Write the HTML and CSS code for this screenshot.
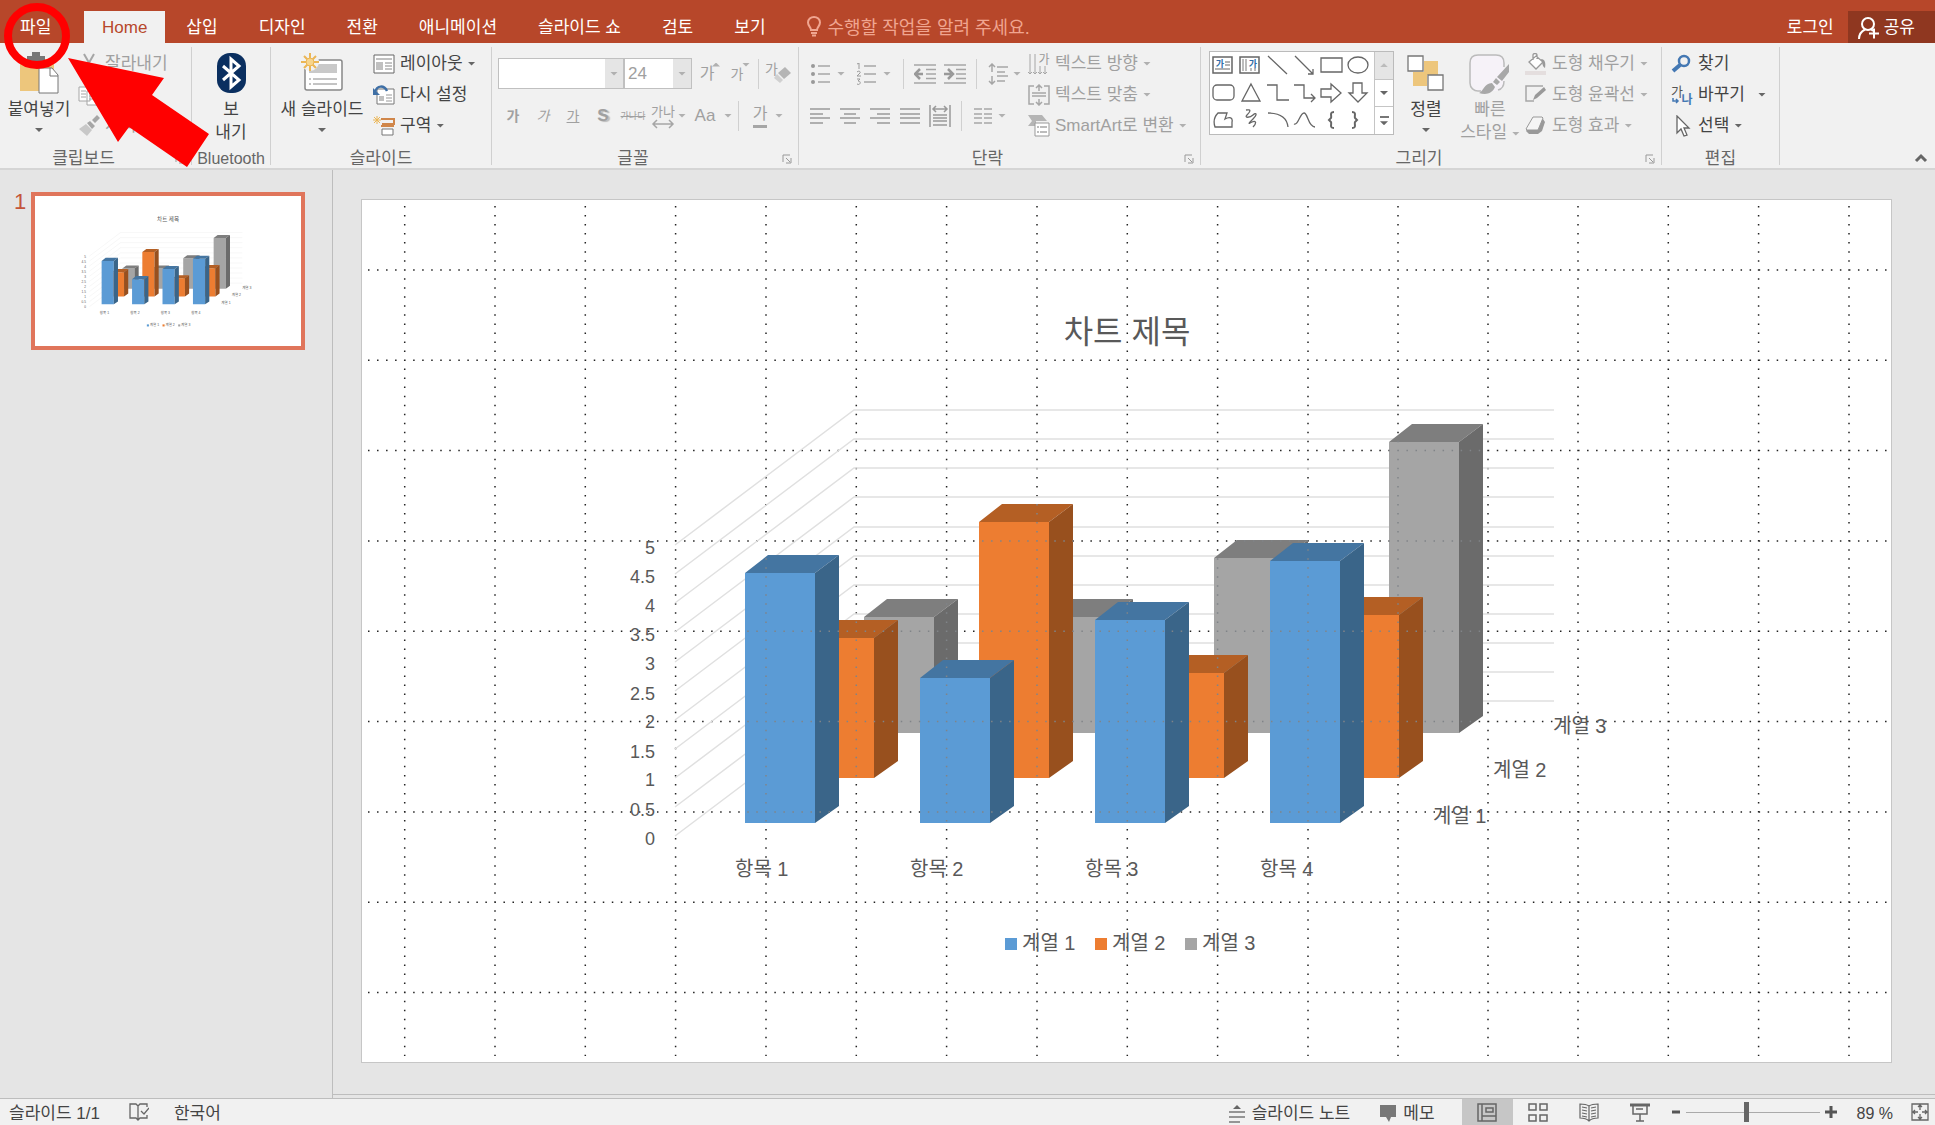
FILE: index.html
```html
<!DOCTYPE html>
<html lang="ko">
<head>
<meta charset="utf-8">
<title>프레젠테이션</title>
<link rel="stylesheet" href="styles.css">
</head>
<body>
<div class="app">
  <header class="titlebar">
    <nav class="tabs">
      <a class="tab tab-file" href="#">파일</a>
      <a class="tab tab-active" href="#">Home</a>
      <a class="tab" href="#">삽입</a>
      <a class="tab" href="#">디자인</a>
      <a class="tab" href="#">전환</a>
      <a class="tab" href="#">애니메이션</a>
      <a class="tab" href="#">슬라이드 쇼</a>
      <a class="tab" href="#">검토</a>
      <a class="tab" href="#">보기</a>
      <a class="tab tab-tell" href="#">
        <svg width="14" height="21" viewBox="0 0 14 21" fill="none" stroke="#f0a590" stroke-width="2"><path d="M4 14C4 11 1 10 1 6.500a6 5.500 0 0 1 12 0C13 10 10 11 10 14ZM4 17h6M5 19.500h4"/></svg>
        수행할 작업을 알려 주세요.</a>
    </nav>
    <div class="account">
      <a class="login" href="#">로그인</a>
      <button class="share" type="button">
        <svg width="22" height="24" viewBox="0 0 22 24" fill="none" stroke="#fff" stroke-width="2"><circle cx="10" cy="8" r="6"/><path d="M1 23c0-5 3-8 6-9.500M13 13l2 2M16 12.500v10M11 17.500h10"/></svg>
        공유</button>
    </div>
  </header>

  <section class="ribbon" aria-label="리본">
    <div class="group g-clipboard">
      <div class="group-body">
        <button class="big big-paste" type="button">
          <span class="big-icon"><svg width="40" height="44" viewBox="0 0 40 44"><path d="M1 8h34v32H1z" fill="#edc67c"/><path d="M8 11V5h5V1h8v4h5v6z" fill="#777"/><path d="M20 17h13l6 7v18H20z" fill="#fff" stroke="#777"/><path d="M31 17v8h8" fill="none" stroke="#777"/></svg></span>
          <span>붙여넣기</span><i class="caret"></i>
        </button>
        <div class="stack off">
          <button class="small" type="button"><svg width="22" height="22" viewBox="0 0 22 22" stroke="#a6a6a6" stroke-width="2" fill="none"><path d="M6 1l8 14M16 1L8 15"/><circle cx="6" cy="18" r="3"/><circle cx="16" cy="18" r="3"/></svg>잘라내기</button>
          <button class="small" type="button"><svg width="22" height="22" viewBox="0 0 22 22" stroke="#a6a6a6" fill="#fff"><path d="M1 3h11v14H1zM9 7h11v14H9zM3 7h5M3 10h5M3 13h5M11 12h7M11 15h7"/></svg>복사 <i class="caret"></i></button>
          <button class="small" type="button"><svg width="22" height="22" viewBox="0 0 22 22" fill="#a6a6a6"><path d="M1 14l7-5 6 6-5 6z" fill="#c8c8c8"/><path d="M9 8l3-2 5 5-3 3zM14 5l5-5 3 3-5 5z"/></svg>서식 복사</button>
        </div>
      </div>
      <div class="group-foot"><span>클립보드</span><button class="launch" type="button" aria-label="클립보드 옵션"><svg width="10" height="10"><use href="#i-launch"/></svg></button></div>
    </div>

    <div class="group g-bt">
      <div class="group-body center">
        <button class="big" type="button">
          <span class="big-icon"><svg width="30" height="42" viewBox="0 0 30 42"><rect x="1" y="1" width="29" height="40" rx="13" fill="#0a2f60"/><path d="M7 14l16 14-8 7V7l8 7L7 28" fill="none" stroke="#fff" stroke-width="3"/></svg></span>
          <span>보<br>내기</span>
        </button>
      </div>
      <div class="group-foot"><span>Bluetooth</span></div>
    </div>

    <div class="group g-slides">
      <div class="group-body">
        <button class="big big-new" type="button">
          <span class="big-icon"><svg width="42" height="40" viewBox="0 0 42 40"><rect x="4" y="7" width="37" height="30" rx="2" fill="#fff" stroke="#888" stroke-width="1.500"/><path d="M8 11h28v9H8z" fill="#c9c9c9"/><path d="M8 26h2M12 26h24M8 31h2M12 31h24" stroke="#888"/><circle cx="9" cy="9" r="9" fill="#f1f1f1"/><path d="M9 0v18M0 9h18M3 3l12 12M15 3L3 15" stroke="#ebb656" stroke-width="2"/><circle cx="9" cy="9" r="4" fill="#f7d58d" stroke="#ebb656"/></svg></span>
          <span>새 슬라이드</span><i class="caret"></i>
        </button>
        <div class="stack">
          <button class="small" type="button"><svg width="22" height="22" viewBox="0 0 22 22"><path d="M1 2h20v18H1z" fill="#fff" stroke="#666"/><path d="M3 5h16v2H3zM3 9h7v8H3z" fill="#c0c0c0"/><path d="M12 10h7M12 13h7M12 16h7" stroke="#888"/></svg>레이아웃 <i class="caret"></i></button>
          <button class="small" type="button"><svg width="22" height="22" viewBox="0 0 22 22"><path d="M4 5h17v15H4z" fill="#fff" stroke="#777"/><path d="M6 12h5v5H6z" fill="#c0c0c0"/><path d="M13 11h6M13 14h6M13 17h6" stroke="#999"/><path d="M2 8c2-7 9-7 12-1" fill="none" stroke="#3f6fa5" stroke-width="2.500"/><path d="M0 4v7h7z" fill="#3f6fa5"/></svg>다시 설정</button>
          <button class="small" type="button"><svg width="22" height="22" viewBox="0 0 22 22"><path d="M8 4h13v5H9M8 11h13" fill="none" stroke="#d0864a" stroke-width="2"/><path d="M9 14h11v6H9z" fill="#fff" stroke="#777"/><path d="M4 1v8M0 5h8M1 2l6 6M7 2L1 8" stroke="#ebb656"/></svg>구역 <i class="caret"></i></button>
        </div>
      </div>
      <div class="group-foot"><span>슬라이드</span></div>
    </div>

    <div class="group g-font">
      <div class="group-body rows off">
        <div class="row">
          <span class="combo combo-name"><input type="text" aria-label="글꼴"><button type="button" aria-label="글꼴 목록"><i class="caret"></i></button></span>
          <span class="combo combo-size"><input type="text" value="24" aria-label="글꼴 크기"><button type="button" aria-label="크기 목록"><i class="caret"></i></button></span>
          <button class="tool" type="button"><span class="ga">가</span><i class="caret up tip"></i></button>
          <button class="tool" type="button"><span class="ga ga-s">가</span><i class="caret tip"></i></button>
          <i class="vline"></i>
          <button class="tool erase" type="button" aria-label="서식 지우기"><span class="ga-s">가</span><svg class="eraser" width="18" height="18" viewBox="0 0 18 18"><path d="M5 7l7-6 6 6-7 6z" fill="#b5b5b5"/><path d="M4 8l6 6-3 3-6-5z" fill="#d0d0d0"/></svg></button>
        </div>
        <div class="row row-b">
          <button class="tool" type="button"><b class="ga-s">가</b></button>
          <button class="tool" type="button"><em class="ga-s">가</em></button>
          <button class="tool" type="button"><u class="ga-s">가</u></button>
          <button class="tool" type="button"><b class="shadow">S</b></button>
          <button class="tool" type="button"><s class="strike">가나다</s></button>
          <button class="tool" type="button"><svg width="24" height="28" viewBox="0 0 24 28"><text x="12" y="14" text-anchor="middle" font-size="13" fill="#a0a0a0">가나</text><path d="M2 22h20M6 18l-4 4 4 4M18 18l4 4-4 4" fill="none" stroke="#a6a6a6" stroke-width="1.500"/></svg></button>
          <i class="caret"></i>
          <button class="tool aa" type="button">Aa</button>
          <i class="caret"></i>
          <i class="vline"></i>
          <button class="tool" type="button"><span class="ga fontcolor">가</span></button>
          <i class="caret"></i>
        </div>
      </div>
      <div class="group-foot"><span>글꼴</span><button class="launch" type="button" aria-label="글꼴 옵션"><svg width="10" height="10"><use href="#i-launch"/></svg></button></div>
    </div>

    <div class="group g-para">
      <div class="group-body off">
        <div class="rows">
          <div class="row">
            <button class="tool" type="button" aria-label="글머리 기호"><svg width="20" height="22" viewBox="0 0 20 22"><path d="M8 3h12M8 11h12M8 19h12" stroke="#a6a6a6" stroke-width="1.500"/><circle cx="3" cy="3" r="2" fill="#999"/><circle cx="3" cy="11" r="2" fill="#999"/><circle cx="3" cy="19" r="2" fill="#999"/></svg></button>
            <i class="caret spaced"></i>
            <button class="tool num" type="button" aria-label="번호 매기기"><svg width="20" height="22" viewBox="0 0 20 22"><path d="M8 3h12M8 11h12M8 19h12" stroke="#a6a6a6" stroke-width="1.500"/><path d="M1 1l2-1v6M1 9c2-2 4 0 3 1l-3 3h4M1 16h3l-2 2c4 0 2 5-1 3" fill="none" stroke="#999"/></svg></button>
            <i class="caret spaced"></i>
            <i class="vline vline-far"></i>
            <button class="tool" type="button" aria-label="목록 수준 줄임"><svg width="22" height="20" viewBox="0 0 22 20"><path d="M0 1h22M12 5.500h10M12 10h10M12 14.500h10M0 19h22" stroke="#a6a6a6" stroke-width="1.500"/><path d="M9 10H2M6 5l-5 5 5 5" fill="none" stroke="#999" stroke-width="2.500"/></svg></button>
            <button class="tool" type="button" aria-label="목록 수준 늘림"><svg width="22" height="20" viewBox="0 0 22 20"><path d="M0 1h22M12 5.500h10M12 10h10M12 14.500h10M0 19h22" stroke="#a6a6a6" stroke-width="1.500"/><path d="M0 10h7M4 5l5 5-5 5" fill="none" stroke="#999" stroke-width="2.500"/></svg></button>
            <i class="vline"></i>
            <button class="tool" type="button" aria-label="줄 간격"><svg width="20" height="22" viewBox="0 0 20 22"><path d="M9 4h11M9 9h8M9 13h11M9 18h8M4 1v8M4 13v8M1 4l3-3 3 3M1 18l3 3 3-3" fill="none" stroke="#a6a6a6" stroke-width="1.500"/></svg></button>
            <i class="caret"></i>
          </div>
          <div class="row row-b">
            <button class="tool" type="button" aria-label="왼쪽 맞춤"><svg width="20" height="16" viewBox="0 0 20 16"><path d="M0 1h20M0 6h13M0 10h20M0 15h13" stroke="#999" stroke-width="1.500"/></svg></button>
            <button class="tool" type="button" aria-label="가운데 맞춤"><svg width="20" height="16" viewBox="0 0 20 16"><path d="M0 1h20M4 6h12M0 10h20M4 15h12" stroke="#999" stroke-width="1.500"/></svg></button>
            <button class="tool" type="button" aria-label="오른쪽 맞춤"><svg width="20" height="16" viewBox="0 0 20 16"><path d="M0 1h20M7 6h13M0 10h20M7 15h13" stroke="#999" stroke-width="1.500"/></svg></button>
            <button class="tool" type="button" aria-label="양쪽 맞춤"><svg width="20" height="16" viewBox="0 0 20 16"><path d="M0 1h20M0 6h20M0 10h20M0 15h20" stroke="#999" stroke-width="1.500"/></svg></button>
            <button class="tool" type="button" aria-label="균등 분할"><svg width="22" height="22" viewBox="0 0 22 22"><path d="M1 0v22M21 0v22M4 10h14M4 13h14M4 16h14M4 20h14M4 4h14M7 1L4 4l3 3M15 1l3 3-3 3" fill="none" stroke="#999" stroke-width="1.500"/></svg></button>
            <i class="vline"></i>
            <button class="tool" type="button" aria-label="단"><svg width="18" height="16" viewBox="0 0 18 16"><path d="M0 1h8M0 6h8M0 10h8M0 15h8M10 1h8M10 6h8M10 10h8M10 15h8" stroke="#a6a6a6" stroke-width="1.500"/></svg></button>
            <i class="caret"></i>
          </div>
        </div>
        <div class="stack">
          <button class="small" type="button"><svg width="22" height="22" viewBox="0 0 22 22"><path d="M2 1v20M7 1v20M12 13v8M17 13v8M0 19l2 2 2-2M5 19l2 2 2-2M10 19l2 2 2-2M15 19l2 2 2-2" fill="none" stroke="#a6a6a6"/><text x="16" y="11" text-anchor="middle" font-size="12" fill="#999">가</text></svg>텍스트 방향 <i class="caret"></i></button>
          <button class="small" type="button"><svg width="22" height="22" viewBox="0 0 22 22"><path d="M6 2H1v18h5M16 2h5v18h-5M11 1v6M8 4l3-3 3 3M11 15v6M8 18l3 3 3-3M4 9h14M4 12h14" fill="none" stroke="#a6a6a6" stroke-width="1.500"/></svg>텍스트 맞춤 <i class="caret"></i></button>
          <button class="small" type="button"><svg width="22" height="22" viewBox="0 0 22 22"><path d="M0 0h14l5 6H8v5H0l4-5z" fill="#b5b5b5"/><path d="M7 8h14v13H7z" fill="#fff" stroke="#999"/><path d="M9 12h2M12 12h7M9 17h2M12 17h7" stroke="#a6a6a6" stroke-width="1.500"/></svg>SmartArt로 변환 <i class="caret"></i></button>
        </div>
      </div>
      <div class="group-foot"><span>단락</span><button class="launch" type="button" aria-label="단락 옵션"><svg width="10" height="10"><use href="#i-launch"/></svg></button></div>
    </div>

    <div class="group g-draw">
      <div class="group-body">
        <div class="gallery">
          <svg width="164" height="80" viewBox="0 0 164 80" fill="none" stroke="#666" stroke-width="1.300">
            <path d="M3 5h19v16H3zM30 5h19v16H30z" stroke-width="1.500"/>
            <path d="M15 10h5M15 13h5M5 17h15" stroke="#999"/><path d="M33 7v12M36 7v12M41 16v3M45 16v3" stroke="#999"/>
            <text x="10" y="15" text-anchor="middle" font-size="9" font-weight="700" fill="#2f6ca8" stroke="none">가</text><text x="43" y="15" text-anchor="middle" font-size="9" font-weight="700" fill="#2f6ca8" stroke="none">가</text>
            <path d="M58 4l19 18M85 4l18 18M103 17v5h-5M111 6h21v14h-21z"/><ellipse cx="148" cy="13" rx="10" ry="8"/>
            <rect x="3" y="33" width="21" height="15" rx="4"/><path d="M41 32l9 17H32zM57 33h10v15h12M84 33h10v13h11M101 42l4 4-4 4M111 37h10v-5l10 9-10 9v-5h-10zM143 31h9v10h5l-9 9-9-9h4z"/>
            <path d="M8 61h9l-2 6c5-3 8-1 7 3v5H5c-2-6-1-10 3-14zM36 58c6-1 4 2 1 5s3 3 6 0 5-1 0 4-5 5-1 3 5 1 1 5M58 61c12 0 19 5 20 14M84 72c4 2 6-11 10-11s4 14 11 14"/>
            <path d="M124 60c-5 0-2 4-3 6l-2 2 2 2c1 2-2 6 3 6M142 60c5 0 2 4 3 6l2 2-2 2c-1 2 2 6-3 6" stroke-width="2"/>
          </svg>
          <div class="gallery-scroll">
            <button type="button" class="dim" aria-label="위로"><i class="caret up"></i></button>
            <button type="button" aria-label="아래로"><i class="caret"></i></button>
            <button type="button" class="more" aria-label="자세히"><i class="caret"></i></button>
          </div>
        </div>
        <button class="big big-arrange" type="button">
          <span class="big-icon"><svg width="38" height="40" viewBox="0 0 38 40"><path d="M17 8h14v14H17zM6 19h14v14H6z" fill="#edc67c"/><path d="M1 3h15v15H1zM21 22h15v15H21z" fill="#fff" stroke="#777" stroke-width="1.300"/></svg></span>
          <span>정렬</span><i class="caret"></i>
        </button>
        <button class="big big-quick off" type="button">
          <span class="big-icon"><svg width="42" height="44" viewBox="0 0 42 44"><path d="M16 40H9c-4 0-8-3-8-8V12c0-5 3-8 8-8h18c5 0 8 3 8 8v20c0 5-4 8-8 8z" fill="#f6f2f8"/><path d="M12 40H9c-4 0-8-3-8-8V12c0-5 3-8 8-8h18c5 0 8 3 8 8v4M35 30c0 5-2 8-6 9" fill="none" stroke="#bbb" stroke-width="1.500"/><path d="M40 13v8l-7 9-5-4zM27 27l4 4-3 3-4-3zM23 32l3 4c-3 7-9 8-16 6 4-1 5-10 13-10z" fill="#a8a8a8"/></svg></span>
          <span>빠른<br>스타일 <i class="caret"></i></span>
        </button>
        <div class="stack off">
          <button class="small" type="button"><svg width="22" height="22" viewBox="0 0 22 22"><path d="M4 9l7-6 7 6-7 7zM8 7V2c0-2 4-2 4 0v4" fill="#fff" stroke="#999" stroke-width="1.300"/><path d="M16 6c4 0 5 4 4 9-3-2-2-4-4-9z" fill="#999"/><path d="M0 18h21v4H0z" fill="#e4dede"/></svg>도형 채우기 <i class="caret"></i></button>
          <button class="small" type="button"><svg width="22" height="22" viewBox="0 0 22 22"><path d="M18 2H1v15h8" fill="none" stroke="#a6a6a6" stroke-width="1.500"/><path d="M8 16l2-5 9-8 2 3-9 8z" fill="#999"/></svg>도형 윤곽선 <i class="caret"></i></button>
          <button class="small" type="button"><svg width="22" height="22" viewBox="0 0 22 22"><path d="M8 4h10l2 3-3 9-4 3H4l-3-3z" fill="#999"/><path d="M8 2h9l1 1-5 12H2l-1-1z" fill="#f5f5f5" stroke="#999"/></svg>도형 효과 <i class="caret"></i></button>
        </div>
      </div>
      <div class="group-foot"><span>그리기</span><button class="launch" type="button" aria-label="그리기 옵션"><svg width="10" height="10"><use href="#i-launch"/></svg></button></div>
    </div>

    <div class="group g-edit">
      <div class="group-body">
        <div class="stack">
          <button class="small" type="button"><svg width="22" height="22" viewBox="0 0 22 22" fill="none" stroke="#4478b3"><circle cx="13" cy="8" r="5" stroke-width="2.500"/><path d="M9 12l-7 6" stroke-width="4"/></svg>찾기</button>
          <button class="small" type="button"><svg width="22" height="22" viewBox="0 0 22 22"><text x="6" y="12" text-anchor="middle" font-size="13" fill="#555">가</text><text x="16" y="20" text-anchor="middle" font-size="12" font-weight="700" fill="#4478b3">나</text><path d="M2 14v3h5M5 15l2 2-2 2" fill="none" stroke="#4478b3" stroke-width="1.500"/></svg>바꾸기 <i class="caret caret-far"></i></button>
          <button class="small" type="button"><svg width="22" height="22" viewBox="0 0 22 22"><path d="M6 1v17l4-4 3 7 3-1-3-7h5z" fill="#fff" stroke="#666" stroke-width="1.300"/></svg>선택 <i class="caret"></i></button>
        </div>
      </div>
      <div class="group-foot"><span>편집</span></div>
    </div>
    <button class="collapse" type="button" aria-label="리본 축소"><svg width="14" height="10" viewBox="0 0 14 10"><path d="M2 8l5-5 5 5" fill="none" stroke="#666" stroke-width="3"/></svg></button>
  </section>

  <div class="workspace">
    <aside class="slides">
      <span class="slide-no">1</span>
      <a class="thumb" href="#" aria-label="슬라이드 1"><svg viewBox="362 199 1529 862"><use href="#chart"/></svg></a>
    </aside>
    <main class="stage">
      <div class="slide">
        <svg viewBox="362 199 1529 862" role="img" aria-label="차트 제목">
          <defs>
            <symbol id="i-launch" viewBox="0 0 10 10"><path d="M1 8V1h7M4 4l4 4M9 4v5H4" fill="none" stroke="#999"/></symbol>
            <path id="grid" d="M404.700 205v850M495 205v850M585.300 205v850M675.600 205v850M766 205v850M856.300 205v850M946.600 205v850M1037 205v850M1127.300 205v850M1217.600 205v850M1308 205v850M1398 205v850M1488 205v850M1578 205v850M1668.300 205v850M1758.600 205v850M1849 205v850M368 269h1520M368 359.300h1520M368 449.600h1520M368 540h1520M368 630.300h1520M368 720.600h1520M368 811h1520M368 901.300h1520M368 991.600h1520"/>
            <clipPath id="bars">
              <path d="M745 822V572l23-18h71v251l-24 17zM920 822V677l23-18h71v146l-24 17zM1095 822V619l23-18h71v204l-24 17zM1270 822V560l23-18h71v263l-24 17z"/>
              <path d="M804 777V637l23-18h71v141l-24 17zM979 777V521l23-18h71v257l-24 17zM1154 777V672l23-18h71v106l-24 17zM1329 777V614l23-18h71v164l-24 17z"/>
              <path d="M864 732V616l23-18h71v117l-24 17zM1039 732V616l23-18h71v117l-24 17zM1214 732V557l23-18h71v176l-24 17zM1389 732V441l23-18h71v292l-24 17z"/>
            </clipPath>
          </defs>
          <use href="#grid" class="dots"/>
          <g id="chart">
            <path class="walls" d="M675 544l179-135h700M675 573l179-135h700M675 602l179-135h700M675 631l179-135h700M675 661l179-135h700M675 690l179-135h700M675 719l179-135h700M675 748l179-135h700M675 777l179-135h700M675 806l179-135h700M675 835l179-135h700"/>
            <g class="s3">
              <path class="face" d="M864 616h70v116h-70zM1039 616h70v116h-70zM1214 557h70v175h-70zM1389 441h70v291h-70z"/>
              <path class="lid" d="M864 616l23-18h71l-24 18zM1039 616l23-18h71l-24 18zM1214 557l23-18h71l-24 18zM1389 441l23-18h71l-24 18z"/>
              <path class="side" d="M934 616l24-18v117l-24 17zM1109 616l24-18v117l-24 17zM1284 557l24-18v176l-24 17zM1459 441l24-18v292l-24 17z"/>
            </g>
            <g class="s2">
              <path class="face" d="M804 637h70v140h-70zM979 521h70v256h-70zM1154 672h70v105h-70zM1329 614h70v163h-70z"/>
              <path class="lid" d="M804 637l23-18h71l-24 18zM979 521l23-18h71l-24 18zM1154 672l23-18h71l-24 18zM1329 614l23-18h71l-24 18z"/>
              <path class="side" d="M874 637l24-18v141l-24 17zM1049 521l24-18v257l-24 17zM1224 672l24-18v106l-24 17zM1399 614l24-18v164l-24 17z"/>
            </g>
            <g class="s1">
              <path class="face" d="M745 572h70v250h-70zM920 677h70v145h-70zM1095 619h70v203h-70zM1270 560h70v262h-70z"/>
              <path class="lid" d="M745 572l23-18h71l-24 18zM920 677l23-18h71l-24 18zM1095 619l23-18h71l-24 18zM1270 560l23-18h71l-24 18z"/>
              <path class="side" d="M815 572l24-18v251l-24 17zM990 677l24-18v146l-24 17zM1165 619l24-18v204l-24 17zM1340 560l24-18v263l-24 17z"/>
            </g>
            <text class="chart-title" x="1127" y="342">차트 제목</text>
            <g class="values">
              <text x="655" y="553">5</text><text x="655" y="582">4.5</text><text x="655" y="611">4</text><text x="655" y="640">3.5</text><text x="655" y="669">3</text><text x="655" y="699">2.5</text><text x="655" y="727">2</text><text x="655" y="757">1.5</text><text x="655" y="785">1</text><text x="655" y="815">0.5</text><text x="655" y="844">0</text>
            </g>
            <g class="names">
              <text x="735" y="875">항목 1</text><text x="910" y="875">항목 2</text><text x="1085" y="875">항목 3</text><text x="1260" y="875">항목 4</text>
              <text x="1433" y="822">계열 1</text><text x="1493" y="776">계열 2</text><text x="1553" y="732">계열 3</text>
              <text x="1022" y="949">계열 1</text><text x="1112" y="949">계열 2</text><text x="1202" y="949">계열 3</text>
            </g>
            <path class="s1 key" d="M1005 937h12v12h-12z"/><path class="s2 key" d="M1095 937h12v12h-12z"/><path class="s3 key" d="M1185 937h12v12h-12z"/>
          </g>
          <use href="#grid" class="dots dots-over" clip-path="url(#bars)"/>
        </svg>
      </div>
    </main>
  </div>

  <footer class="status">
    <span class="st-slide">슬라이드 1/1</span>
    <button class="st-icon" type="button" aria-label="맞춤법 검사"><svg width="20" height="18" viewBox="0 0 20 18" fill="none" stroke="#666" stroke-width="1.300"><path d="M9 3L7 1H1v14h6l2 2 2-2h7v-3M9 3v14M9 3l2-2h7v3M12 8l3 3 5-6"/></svg></button>
    <span class="st-lang">한국어</span>
    <span class="grow"></span>
    <button class="st-text" type="button"><svg width="16" height="18" viewBox="0 0 16 18"><path d="M8 0l4 4H4z" fill="#666"/><path d="M0 7h16M0 12h16M0 17h11" stroke="#777" stroke-width="1.500"/></svg>슬라이드 노트</button>
    <button class="st-text st-memo" type="button"><svg width="16" height="18" viewBox="0 0 16 18"><path d="M0 0h16v12H11l-2 5-3-5H0z" fill="#777"/></svg>메모</button>
    <div class="views">
      <button class="view view-on" type="button" aria-label="기본"><svg width="20" height="19" viewBox="0 0 20 19" fill="none" stroke="#666" stroke-width="1.500"><path d="M1 1h18v17H1zM5 1v17M9 5h7v4H9zM5 13h14"/></svg></button>
      <button class="view" type="button" aria-label="여러 슬라이드"><svg width="20" height="19" viewBox="0 0 20 19" fill="none" stroke="#666" stroke-width="1.500"><path d="M1 1h7v6H1zM12 1h7v6h-7zM1 12h7v6H1zM12 12h7v6h-7z"/></svg></button>
      <button class="view" type="button" aria-label="읽기용"><svg width="20" height="19" viewBox="0 0 20 19" fill="none" stroke="#666" stroke-width="1.200"><path d="M10 3C7 1 4 1 1 1v14c3 0 6 0 9 3 3-3 6-3 9-3V1c-3 0-6 0-9 2zM10 3v15M3 4l5 1M3 7l5 1M3 10l5 1M3 13l5 1M17 4l-5 1M17 7l-5 1M17 10l-5 1M17 13l-5 1"/></svg></button>
      <button class="view" type="button" aria-label="슬라이드 쇼"><svg width="20" height="19" viewBox="0 0 20 19" fill="none" stroke="#666" stroke-width="1.500"><path d="M0 2h20" stroke-width="3"/><path d="M3 3v8h14V3M6 6h7M10 11v7M6 18h8"/></svg></button>
    </div>
    <button class="zoom-btn" type="button" aria-label="축소"><svg width="10" height="10" viewBox="0 0 10 10"><path d="M1 5h8" stroke="#555" stroke-width="3"/></svg></button>
    <input class="zoom" type="range" min="0" max="100" value="45" aria-label="확대/축소">
    <button class="zoom-btn" type="button" aria-label="확대"><svg width="12" height="12" viewBox="0 0 12 12"><path d="M0 6h12M6 0v12" stroke="#555" stroke-width="3"/></svg></button>
    <span class="zoom-val">89 %</span>
    <button class="st-icon fit" type="button" aria-label="창에 맞춤"><svg width="18" height="18" viewBox="0 0 18 18" fill="none" stroke="#666" stroke-width="1.300"><path d="M1 1h16v16H1zM9 2v5M7 4l2-2 2 2M9 16v-5M7 14l2 2 2-2M2 9h5M4 7L2 9l2 2M16 9h-5M14 7l2 2-2 2"/></svg></button>
  </footer>

  <svg class="callout" width="212" height="170" viewBox="0 0 212 170"><circle cx="37" cy="36" r="29" fill="none" stroke="#f00" stroke-width="8"/><path d="M68 58l96 20-12 17 57 39-22 33-58-40-11 15z" fill="#f00"/></svg>
</div>
</body>
</html>
```
FILE: styles.css
```css
* { box-sizing: border-box; }

body {
  margin: 0;
  font-family: "Liberation Sans", "Noto Sans CJK KR", sans-serif;
  font-size: 17px;
  line-height: 24px;
  color: #444;
  background: #e5e5e5;
}

button, input {
  font: inherit;
  color: inherit;
  border: 0;
  padding: 0;
  margin: 0;
  background: none;
}

a { color: inherit; text-decoration: none; }
svg { display: block; flex: none; }

.app {
  position: relative;
  display: flex;
  flex-direction: column;
  min-height: 100vh;
  overflow: hidden;
}

/* title bar */
.titlebar {
  display: flex;
  justify-content: space-between;
  height: 43px;
  padding-top: 11px;
  background: #b7472a;
  color: #fff;
}
.tabs, .account { display: flex; white-space: nowrap; }
.tabs { gap: 1px; }
.tab { padding: 5px 20px 3px; }
.tab-file { width: 83px; }
.tab-active { padding: 5px 18px 3px; background: #f1f1f1; color: #b7472a; }
.tab-tell { display: flex; gap: 7px; font-size: 18px; color: #f0a590; }
.account { gap: 14px; }
.login { padding: 5px 0 3px; }
.share {
  display: flex;
  gap: 4px;
  align-items: center;
  padding: 2px 20px 0 10px;
  background: #8f3720;
}

/* ribbon */
.ribbon {
  display: flex;
  height: 127px;
  padding: 4px 0 2px;
  background: #f1f1f1;
  border-bottom: 2px solid #d5d5d5;
}
.group {
  display: flex;
  flex-direction: column;
  flex: none;
  height: 118px;
  border-right: 1px solid #d0d0d0;
}
.g-clipboard { width: 192px; }
.g-bt { width: 79px; }
.g-slides { width: 221px; }
.g-font { width: 307px; }
.g-para { width: 402px; }
.g-draw { width: 461px; }
.g-edit { width: 118px; }
.group-body { display: flex; flex: 1; white-space: nowrap; }
.group-body.center { justify-content: center; }
.group-foot { display: flex; height: 20px; line-height: 27px; color: #666; }
.group-foot span { flex: 1; text-align: center; }
.g-bt .group-foot { font-size: 16px; }
.launch { width: 24px; height: 27px; display: flex; align-items: center; padding-left: 8px; }

.caret {
  display: inline-block;
  flex: none;
  width: 8px;
  height: 4px;
  background: #666;
  clip-path: polygon(0 0, 100% 0, 50% 100%);
}
.caret.up { clip-path: polygon(50% 0, 100% 100%, 0 100%); }
.off { color: #a0a0a0; }
.off .caret { background: #b0b0b0; }

.big { display: flex; flex-direction: column; align-items: center; line-height: 23px; }
.big-icon { display: flex; align-items: center; height: 51px; }
.big > .caret { margin-top: 7px; }
.big-paste { width: 78px; }
.big-new { width: 102px; }
.big-arrange { width: 64px; }
.big-quick { width: 64px; }
.big .caret { vertical-align: middle; }

.stack { display: flex; flex-direction: column; padding-top: 1px; }
.small { display: flex; align-items: center; gap: 5px; height: 31px; }

.rows { display: flex; flex-direction: column; padding-top: 11px; gap: 11px; }
.row { display: flex; align-items: center; height: 31px; }
.group-body.rows { padding-left: 6px; }
.combo { display: flex; height: 31px; border: 1px solid #c0c0c0; background: #fff; }
.combo input { flex: 1; min-width: 0; padding-left: 3px; }
.combo button { width: 18px; background: #e5e5e5; display: flex; align-items: center; justify-content: center; }
.combo-name { width: 126px; }
.combo-size { width: 68px; }
.tool { display: flex; align-items: center; justify-content: center; width: 30px; height: 30px; position: relative; }
.tip { position: absolute; right: 2px; top: 4px; }
.erase { align-items: flex-start; justify-content: flex-start; line-height: 20px; }
.eraser { position: absolute; right: 4px; bottom: 5px; }
.ga { font-size: 16px; }
.ga-s { font-size: 14px; }
.vline { width: 1px; height: 30px; margin: 0 6px; background: #d0d0d0; }
.vline-far { margin-left: 12px; }
.spaced { margin-left: 2px; }
.shadow { text-shadow: 2px 1px 1px #bbb; }
.strike { font-size: 9px; }
.aa { width: 38px; }
.fontcolor { height: 24px; line-height: 20px; border-bottom: 3px solid #a6a6a6; }
.g-para .rows { width: 229px; padding-left: 6px; }
.num { margin-left: 6px; }

.gallery { display: flex; height: 84px; margin: 4px 0 0 8px; border: 1px solid #bbb; background: #fff; }
.gallery-scroll { display: flex; flex-direction: column; width: 19px; border-left: 1px solid #c5c5c5; }
.gallery-scroll button { flex: 1; display: flex; flex-direction: column; gap: 3px; align-items: center; justify-content: center; }
.gallery-scroll button + button { border-top: 1px solid #c5c5c5; }
.gallery-scroll .dim { background: #e5e5e5; }
.dim .caret { background: #bbb; }
.more::before { content: ""; width: 9px; height: 2px; background: #777; }
.g-draw .stack { padding-left: 3px; }
.g-edit .stack { padding-left: 9px; }
.caret-far { margin-left: 8px; }
.collapse { align-self: flex-end; margin: 0 7px 3px auto; }

/* work area */
.workspace { display: flex; flex: 1; }
.slides {
  display: flex;
  align-items: flex-start;
  gap: 5px;
  width: 333px;
  padding: 22px 0 0 14px;
  border-right: 1px solid #bdbdbd;
}
.slide-no { width: 12px; font-size: 22px; line-height: 20px; color: #c4553a; }
.thumb { width: 274px; border: 4px solid #e0755b; background: #fff; }
.stage { flex: 1; padding: 30px 44px 32px 29px; border-bottom: 1px solid #bdbdbd; margin-bottom: 3px; }
.slide { background: #fff; outline: 1px solid #c6c6c6; }

.dots { fill: none; stroke: #222; stroke-width: 1.5; stroke-dasharray: 1.5 7.53; }
.dots-over { stroke: #808488; }
.walls { fill: none; stroke: #e0e0e0; stroke-width: 1.5; }
.s1 { fill: #5b9bd5; }
.s1 .lid { fill: #4475a1; }
.s1 .side { fill: #3a6589; }
.s2 { fill: #ed7d31; }
.s2 .lid { fill: #b45f24; }
.s2 .side { fill: #98501e; }
.s3 { fill: #a5a5a5; }
.s3 .lid { fill: #7e7e7e; }
.s3 .side { fill: #6b6b6b; }
.chart-title { font-size: 32px; fill: #595959; text-anchor: middle; }
.values { font-size: 18px; fill: #595959; text-anchor: end; }
.names { font-size: 20px; fill: #595959; }

/* status bar */
.status {
  display: flex;
  align-items: center;
  height: 27px;
  padding: 0 6px 0 9px;
  background: #f1f1f1;
  border-top: 1px solid #bdbdbd;
  white-space: nowrap;
}
.status > span, .st-text { padding-top: 4px; }
.st-icon { margin: 0 25px 0 29px; }
.grow { flex: 1; }
.st-text { display: flex; align-items: center; gap: 7px; }
.st-memo { margin: 0 27px 0 30px; }
.views { display: flex; align-self: stretch; }
.view { width: 51px; display: flex; align-items: center; justify-content: center; }
.view-on { background: #c6c6c6; }
.zoom-btn { margin: 0 5px; }
.zoom { appearance: none; width: 134px; height: 22px; background: linear-gradient(#aaa, #aaa) center / 100% 1px no-repeat; }
.zoom::-webkit-slider-thumb { appearance: none; width: 5px; height: 20px; background: #666; }
.status > .zoom-val { margin-left: 15px; font-size: 16px; }
.fit { margin: 0 0 0 18px; }

/* highlight drawn over the window */
.callout { position: absolute; left: 0; top: 0; pointer-events: none; }
```
